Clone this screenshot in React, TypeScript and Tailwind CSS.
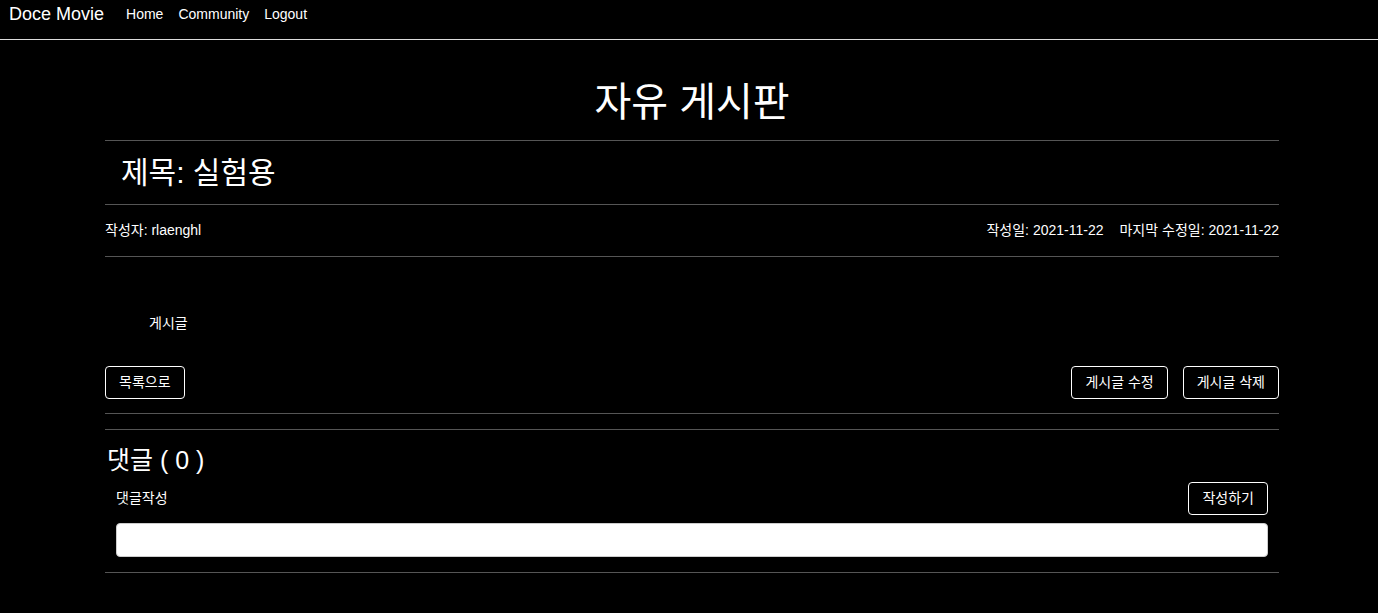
import React from 'react';

const font = { fontFamily: '"Liberation Sans", "Noto Sans CJK KR", sans-serif' };

function Navbar() {
  return (
    <nav className="flex h-[40px] items-start border-b border-[#dcdcdc] pl-[9px] pt-[3px]">
      <span className="mr-[22px] text-[18px] leading-[22px] text-white">Doce Movie</span>
      <div className="flex gap-[15px] pt-[2px] text-[14px] leading-[18px] text-white">
        <span>Home</span>
        <span>Community</span>
        <span>Logout</span>
      </div>
    </nav>
  );
}

function OutlineButton({ label, className = '' }: { label: string; className?: string }) {
  return (
    <button className={`h-[33px] rounded-[4px] border border-white px-[13px] text-[14px] text-white ${className}`}>
      {label}
    </button>
  );
}

export default function App() {
  return (
    <div className="min-h-[613px] bg-black text-white" style={font}>
      <Navbar />
      <main className="ml-[105px] w-[1174px]">
        <h1 className="pt-[38px] pb-[14px] text-center text-[40px] leading-[48px]">자유 게시판</h1>

        <div className="border-t border-[#555]">
          <h2 className="py-[13px] pl-[16px] text-[30px] leading-[37px]">제목: 실험용</h2>
        </div>

        <div className="flex h-[52px] items-center justify-between border-t border-[#555] text-[14px]">
          <span>작성자: rlaenghl</span>
          <div className="flex gap-[16px]">
            <span>작성일: 2021-11-22</span>
            <span>마지막 수정일: 2021-11-22</span>
          </div>
        </div>

        <div className="border-t border-[#555] pt-[57px] pl-[44px] text-[14px] leading-[18px]">게시글</div>

        <div className="flex items-center justify-between pt-[34px] pb-[14px]">
          <OutlineButton label="목록으로" />
          <div className="flex gap-[15px]">
            <OutlineButton label="게시글 수정" />
            <OutlineButton label="게시글 삭제" />
          </div>
        </div>

        <div className="border-t border-[#555] pb-[15px]" />

        <section className="border-t border-[#555] pb-[15px]">
          <h3 className="pt-[15px] pl-[2px] text-[25px] leading-[30px]">댓글 ( 0 )</h3>
          <div className="px-[11px]">
            <div className="mt-[7px] flex items-center justify-between">
              <span className="text-[14px]">댓글작성</span>
              <OutlineButton label="작성하기" />
            </div>
            <input className="mt-[8px] h-[34px] w-full rounded-[4px] border border-[#ccc] bg-white px-3 text-black" />
          </div>
        </section>

        <div className="border-t border-[#555]" />
      </main>
    </div>
  );
}
